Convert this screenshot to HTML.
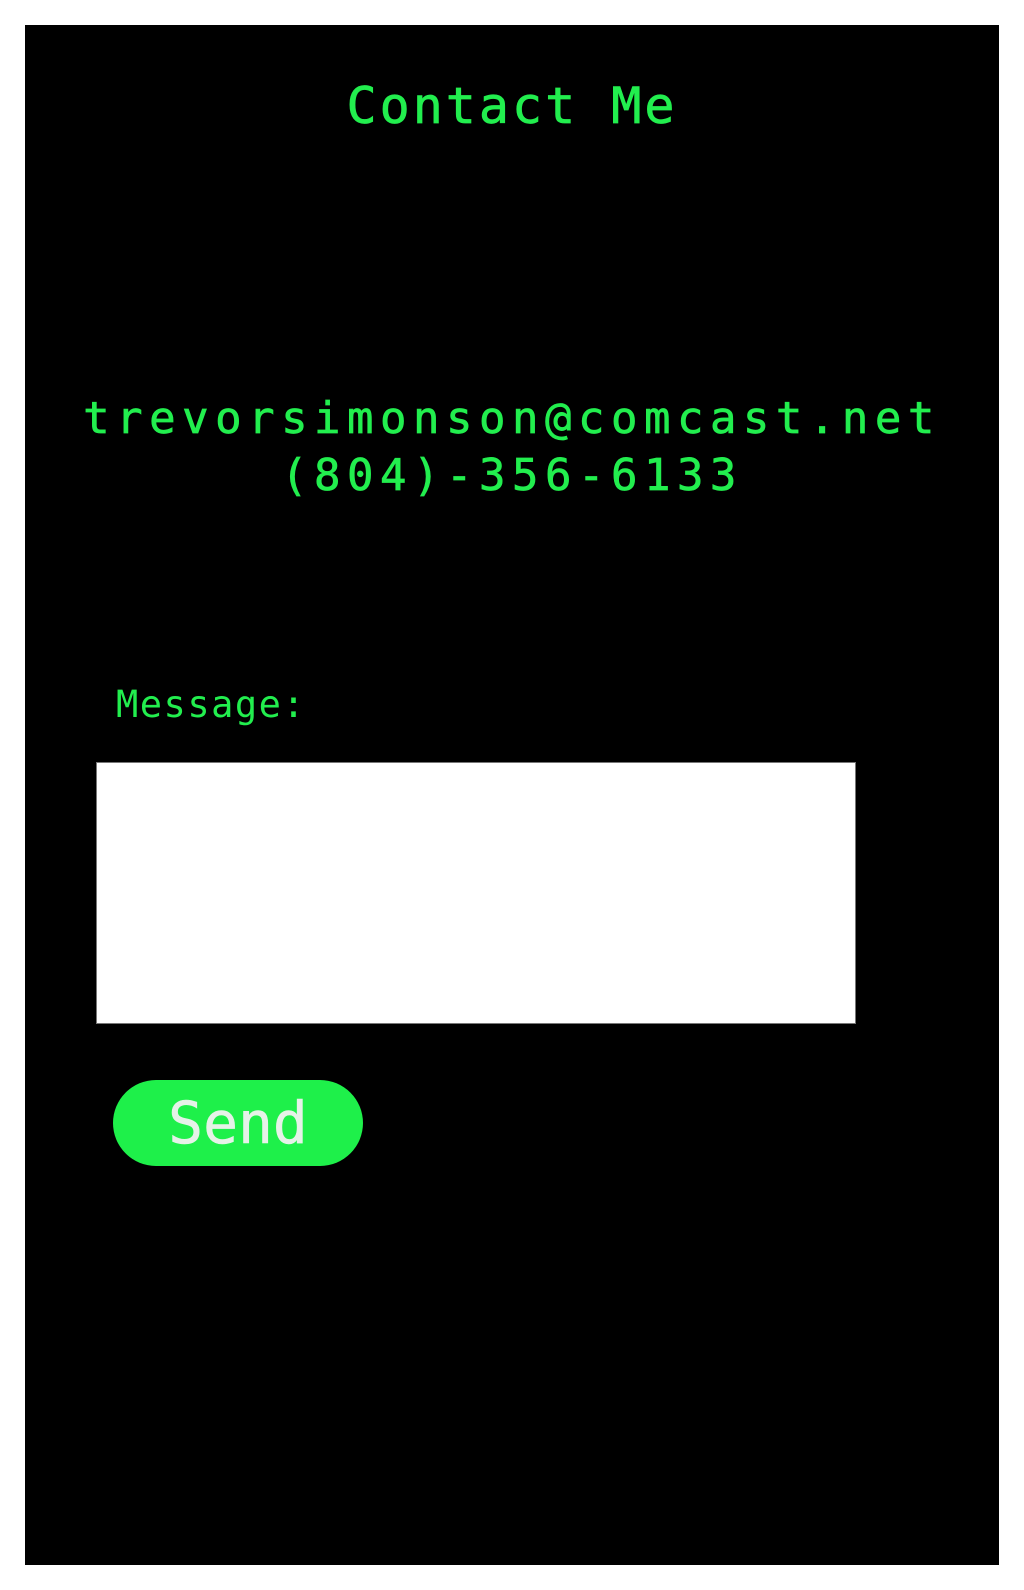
<!DOCTYPE html>
<html><head><style>
html,body{margin:0;padding:0;}
body{width:1024px;height:1590px;background:#fff;position:relative;overflow:hidden;font-family:"DejaVu Sans Mono","Liberation Mono",monospace;}
.panel{position:absolute;left:25px;top:25px;width:974px;height:1540px;background:#000;}
.t{position:absolute;left:0;width:1024px;text-align:center;color:#22ee4e;white-space:nowrap;-webkit-text-stroke:0.7px #22ee4e;}
</style></head><body>
<div class="panel"></div>
<div class="t" style="top:76px;font-size:50px;line-height:60px;letter-spacing:3px;">Contact Me</div>
<div class="t" style="top:392px;font-size:44px;line-height:54px;letter-spacing:6.5px;">trevorsimonson@comcast.net</div>
<div class="t" style="top:449px;font-size:44px;line-height:54px;letter-spacing:6.5px;">(804)-356-6133</div>
<div style="position:absolute;left:116px;top:683px;font-size:37px;line-height:44px;letter-spacing:1.5px;color:#22ee4e;">Message:</div>
<div style="position:absolute;left:96px;top:762px;width:760px;height:262px;background:#fff;border:1px solid #777;box-sizing:border-box;"></div>
<div style="position:absolute;left:113px;top:1080px;width:250px;height:86px;border-radius:43px;background:#1ef04a;color:#e6f2e8;font-size:58px;line-height:86px;text-align:center;-webkit-text-stroke:0.6px #e6f2e8;">Send</div>
</body></html>
